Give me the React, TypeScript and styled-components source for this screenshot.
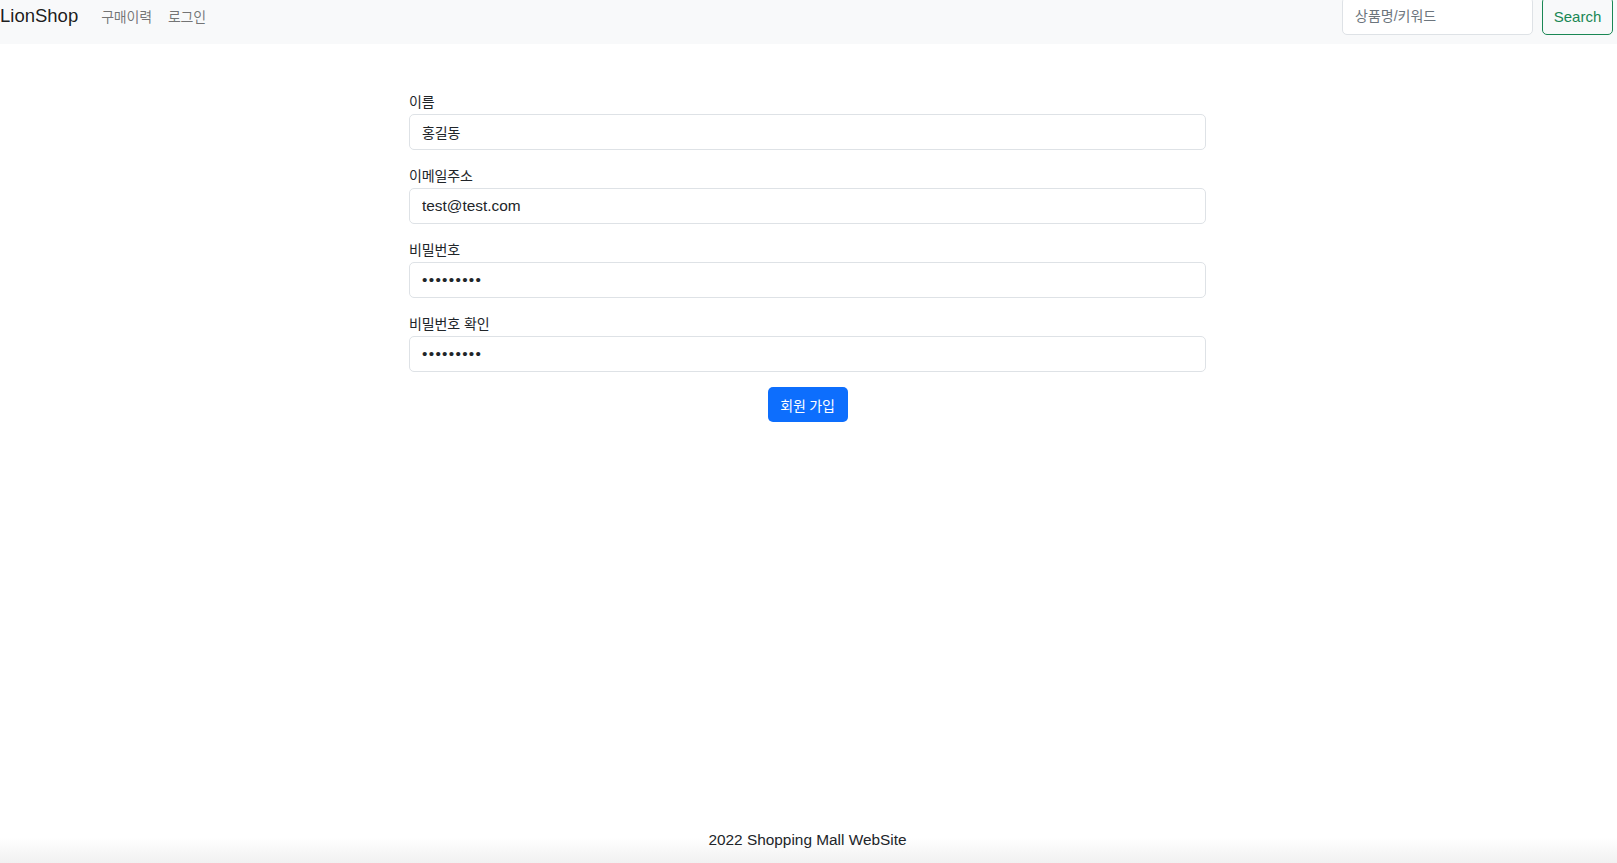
import styled, { createGlobalStyle } from 'styled-components'

const GlobalStyle = createGlobalStyle`
  html, body {
    margin: 0;
    padding: 0;
    background: #fff;
    color: #212529;
    font-family: "Liberation Sans", "Noto Sans CJK KR", sans-serif;
  }
  * { box-sizing: border-box; }
`;

const Page = styled.div`
  min-height: 100vh;
  display: flex;
  flex-direction: column;
`;

const NavBar = styled.nav`
  height: 44px;
  padding: 0 4px 12px 0;
  background-color: #f8f9fa;
  display: flex;
  align-items: center;
  justify-content: space-between;
`;

const NavLeft = styled.div`
  display: flex;
  align-items: center;
`;

const Brand = styled.a`
  font-size: 18.5px;
  color: rgba(0, 0, 0, 0.9);
  margin-right: 15px;
  text-decoration: none;
`;

const NavLink = styled.a`
  font-size: 14px;
  letter-spacing: -0.2px;
  color: rgba(0, 0, 0, 0.55);
  padding: 0 8px;
  text-decoration: none;
`;

const SearchForm = styled.form`
  display: flex;
  gap: 9px;
`;

const SearchInput = styled.input`
  width: 191px;
  height: 38px;
  padding: 0 12px;
  border: 1px solid #dee2e6;
  border-radius: 5px;
  background: #fff;
  font-family: inherit;
  font-size: 14px;
  letter-spacing: 0;
  outline: none;
  &::placeholder { color: #6c757d; }
`;

const SearchButton = styled.button`
  width: 71px;
  height: 38px;
  border: 1px solid #198754;
  border-radius: 5px;
  background: transparent;
  color: #198754;
  font-family: inherit;
  font-size: 15px;
  padding: 0;
`;

const Main = styled.main`
  flex: 1;
  display: flex;
  justify-content: center;
  padding: 49px 2px 0 0;
`;

const Form = styled.form`
  width: 797px;
  display: flex;
  flex-direction: column;
`;

const Group = styled.div`
  margin-bottom: 17px;
  &:last-of-type { margin-bottom: 15px; }
`;

const Label = styled.label`
  display: block;
  font-size: 14px;
  letter-spacing: -0.1px;
  line-height: 18px;
  margin-bottom: 3px;
`;

const Input = styled.input<{ secret?: boolean }>`
  display: block;
  width: 100%;
  height: 36px;
  padding: 0 12px;
  border: 1px solid #dee2e6;
  border-radius: 5px;
  font-family: inherit;
  font-size: 15.4px;
  color: #212529;
  letter-spacing: ${({ secret }) => (secret ? '1.3px' : 'normal')};
  outline: none;
  &.kr { font-size: 14px; letter-spacing: -0.1px; }
`;

const SubmitButton = styled.button`
  align-self: center;
  width: 80px;
  height: 35px;
  border: none;
  border-radius: 5px;
  background-color: #0d6efd;
  color: #fff;
  font-family: inherit;
  font-size: 14px;
  letter-spacing: -0.2px;
  padding: 0;
`;

const Footer = styled.footer`
  height: 46px;
  display: flex;
  align-items: center;
  justify-content: center;
  font-size: 15.4px;
  color: #212529;
  padding-right: 2px;
  background: linear-gradient(to bottom, #ffffff 45%, #f1f1f1 100%);
`;

const fields = [
  { label: '이름', value: '홍길동', type: 'text', kr: true },
  { label: '이메일주소', value: 'test@test.com', type: 'email' },
  { label: '비밀번호', value: '123456789', type: 'password' },
  { label: '비밀번호 확인', value: '123456789', type: 'password' },
];

export default function App() {
  return (
    <Page>
      <GlobalStyle />
      <NavBar>
        <NavLeft>
          <Brand href="#">LionShop</Brand>
          <NavLink href="#">구매이력</NavLink>
          <NavLink href="#">로그인</NavLink>
        </NavLeft>
        <SearchForm onSubmit={(e) => e.preventDefault()}>
          <SearchInput placeholder="상품명/키워드" />
          <SearchButton type="submit">Search</SearchButton>
        </SearchForm>
      </NavBar>

      <Main>
        <Form onSubmit={(e) => e.preventDefault()}>
          {fields.map((f, idx) => (
            <Group key={idx}>
              <Label>{f.label}</Label>
              <Input
                type={f.type}
                defaultValue={f.value}
                secret={f.type === 'password'}
                className={f.kr ? 'kr' : undefined}
              />
            </Group>
          ))}
          <SubmitButton type="submit">회원 가입</SubmitButton>
        </Form>
      </Main>

      <Footer>2022 Shopping Mall WebSite</Footer>
    </Page>
  )
}
